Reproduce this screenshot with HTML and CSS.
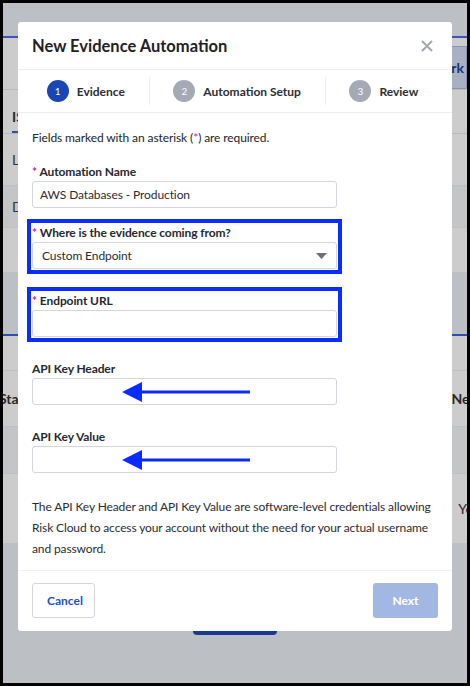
FILE: index.html
```html
<!DOCTYPE html>
<html lang="en">

<head>
  <meta charset="UTF-8">
  <meta name="viewport" content="width=device-width, initial-scale=1.0">
  <title>New Evidence Automation</title>
  <link rel="stylesheet" href="styles.css">
</head>

<body>
  <div class="frame">
    <div class="page">
      <div class="topbar"></div>
      <div class="toolbar">
        <span class="tool-btn">Work</span>
      </div>
      <div class="tabs"><span class="tab active">ISO</span></div>
      <div class="row row-tall"><span class="row-text">Lo</span></div>
      <div class="row row-shade"><span class="row-text">De</span></div>
      <div class="row row-mid"></div>
      <div class="section-head"></div>
      <div class="row row-head"></div>
      <div class="row row-tall2">
        <span class="cell-left">Start</span>
        <span class="cell-right">Need</span>
      </div>
      <div class="row row-shade2"></div>
      <div class="row row-tall3">
        <span class="cell-right">Year</span>
      </div>
      <div class="page-foot">
        <span class="foot-btn"></span>
      </div>
    </div>

    <div class="backdrop">
      <div class="modal">
        <div class="modal-header">
          <h2>New Evidence Automation</h2>
          <svg class="close" width="12" height="12" viewBox="0 0 12 12">
            <path d="M1 1L11 11M11 1L1 11" stroke="#a3a7b0" stroke-width="2" />
          </svg>
        </div>

        <div class="steps">
          <div class="step current"><span class="num">1</span>Evidence</div>
          <div class="step"><span class="num">2</span>Automation Setup</div>
          <div class="step"><span class="num">3</span>Review</div>
        </div>

        <div class="modal-body">
          <p class="hint">Fields marked with an asterisk (<span class="req">*</span>) are required.</p>

          <div class="field first">
            <label><span class="req">*</span> Automation Name</label>
            <div class="input">AWS Databases - Production</div>
          </div>

          <div class="field marked">
            <label><span class="req">*</span> Where is the evidence coming from?</label>
            <div class="input select">Custom Endpoint
              <svg width="11" height="6" viewBox="0 0 11 6">
                <path d="M0 0H11L5.5 6Z" fill="#6b6f7d" />
              </svg>
            </div>
          </div>

          <div class="field marked">
            <label><span class="req">*</span> Endpoint URL</label>
            <div class="input"></div>
          </div>

          <div class="field">
            <label>API Key Header</label>
            <div class="input">
              <svg class="arrow" width="128" height="20" viewBox="0 0 128 20">
                <path d="M19 8.5H128V11.5H19Z M0 10L20 0V20Z" fill="#0a2cff" />
              </svg>
            </div>
          </div>

          <div class="field">
            <label>API Key Value</label>
            <div class="input">
              <svg class="arrow" width="128" height="20" viewBox="0 0 128 20">
                <path d="M19 8.5H128V11.5H19Z M0 10L20 0V20Z" fill="#0a2cff" />
              </svg>
            </div>
          </div>

          <p class="note">The API Key Header and API Key Value are software-level credentials allowing
            Risk Cloud to access your account without the need for your actual username and password.</p>
        </div>

        <div class="modal-footer">
          <button class="btn btn-cancel">Cancel</button>
          <button class="btn btn-next">Next</button>
        </div>
      </div>
    </div>
  </div>
</body>

</html>
```

FILE: styles.css
```css
* {
  box-sizing: border-box;
  font-family: Lato, "Liberation Sans", sans-serif;
}

body {
  margin: 0;
}

.frame {
  width: 470px;
  height: 686px;
  border: 3px solid #000;
  position: relative;
  overflow: hidden;
  background: #fff;
}

/* page behind the dialog */
.topbar {
  height: 35px;
  background: #ebeff5;
  border-bottom: 2px solid #4a6ae8;
}

.toolbar {
  height: 52px;
  display: flex;
  justify-content: flex-end;
  align-items: flex-end;
  border-bottom: 1px solid #e6e8ec;
}

.tool-btn {
  height: 43px;
  padding: 0 2px 0 14px;
  display: flex;
  align-items: center;
  background: #d3dcf3;
  border: 1px solid #a9b9e6;
  color: #1c3f9e;
  font-weight: 700;
  font-size: 14px;
}

.tabs {
  height: 44px;
  padding-left: 9px;
  display: flex;
  align-items: flex-end;
  border-bottom: 1px solid #e6e8ec;
}

.tab {
  font-size: 14px;
  font-weight: 700;
  color: #333;
  padding-bottom: 6px;
  border-bottom: 2px solid #3a62d6;
}

.row {
  display: flex;
  align-items: center;
  justify-content: space-between;
  border-bottom: 1px solid #eef0f3;
}

.row-text {
  padding-left: 9px;
  font-size: 14px;
  color: #444;
}

.row-tall {
  height: 52px;
}

.row-shade {
  height: 42px;
  background: #f6f7f9;
}

.row-mid {
  height: 45px;
}

.section-head {
  height: 63px;
  background: #ebeff5;
  border-bottom: 2px solid #3a62d6;
}

.row-head {
  height: 35px;
}

.row-tall2 {
  height: 56px;
}

.row-shade2 {
  height: 47px;
  background: #f6f7f9;
}

.row-tall3 {
  height: 70px;
  justify-content: flex-end;
}

.cell-left {
  margin-left: -4px;
  font-size: 14px;
  font-weight: 700;
  color: #333;
}

.cell-right {
  margin-right: -18px;
  font-size: 14px;
  color: #333;
}

.row-tall2 .cell-right {
  font-weight: 700;
}

.page-foot {
  height: 200px;
  background: #ebeff5;
  display: flex;
  justify-content: center;
}

.foot-btn {
  margin-top: 55px;
  width: 84px;
  height: 36px;
  border-radius: 4px;
  background: #2148b8;
}

/* dialog */
.backdrop {
  position: absolute;
  inset: 0;
  background: rgba(0, 0, 0, 0.2);
  display: flex;
  justify-content: center;
  align-items: flex-start;
  padding-top: 19px;
}

.modal {
  width: 434px;
  background: #fff;
  border-radius: 3px;
  color: #22242a;
}

.modal-header {
  height: 48px;
  padding: 0 19px 0 14px;
  display: flex;
  align-items: center;
  justify-content: space-between;
  border-bottom: 1px solid #eceef3;
}

.modal-header h2 {
  margin: 0;
  font-size: 16.5px;
  font-weight: 700;
  color: #1f2126;
}

.steps {
  height: 43px;
  padding: 7px 10px 7px 5px;
  display: flex;
  border-bottom: 1px solid #eceef3;
}

.step {
  flex: 1 1 auto;
  display: flex;
  align-items: center;
  justify-content: center;
  gap: 8px;
  font-size: 12px;
  font-weight: 700;
  color: #2b2d33;
}

.step + .step {
  border-left: 1px solid #eceef3;
}

.num {
  width: 22px;
  height: 22px;
  border-radius: 50%;
  background: #a5a9b5;
  color: #fff;
  font-size: 10px;
  font-weight: 400;
  display: flex;
  align-items: center;
  justify-content: center;
}

.current .num {
  background: #1846b5;
}

.modal-body {
  padding: 16px 14px 11px;
}

.hint {
  margin: 0 0 16px;
  font-size: 12px;
  letter-spacing: -0.1px;
  line-height: 18px;
}

.req {
  color: #e0169c;
}

.field {
  margin-bottom: 23px;
  width: 305px;
}

.field.first {
  margin-bottom: 16px;
}

.marked {
  outline: 4px solid #0a2cff;
  outline-offset: 1px;
}

.field label {
  display: block;
  font-size: 12px;
  font-weight: 700;
  letter-spacing: -0.1px;
  line-height: 18px;
  color: #262830;
}

.input {
  position: relative;
  height: 27px;
  border: 1px solid #d4d6de;
  border-radius: 3px;
  padding: 0 7px;
  display: flex;
  align-items: center;
  font-size: 12px;
  letter-spacing: -0.1px;
  color: #2a2c33;
}

.select {
  padding: 0 9px;
  justify-content: space-between;
}

.arrow {
  position: absolute;
  left: 89px;
  top: 3px;
}

.note {
  margin: 21px 0 0;
  font-size: 12px;
  letter-spacing: -0.12px;
  line-height: 21px;
  color: #2a2c33;
}

.modal-footer {
  padding: 12px 14px 13px;
  display: flex;
  justify-content: space-between;
  border-top: 1px solid #f0f1f5;
}

.btn {
  height: 35px;
  border-radius: 3px;
  font-size: 12px;
  font-weight: 700;
  padding: 0 14px;
}

.btn-cancel {
  width: 63px;
  background: #fff;
  border: 1px solid #d4d6de;
  color: #1c4fc4;
}

.btn-next {
  width: 65px;
  background: #a2b8e3;
  border: none;
  color: #fff;
}
```
